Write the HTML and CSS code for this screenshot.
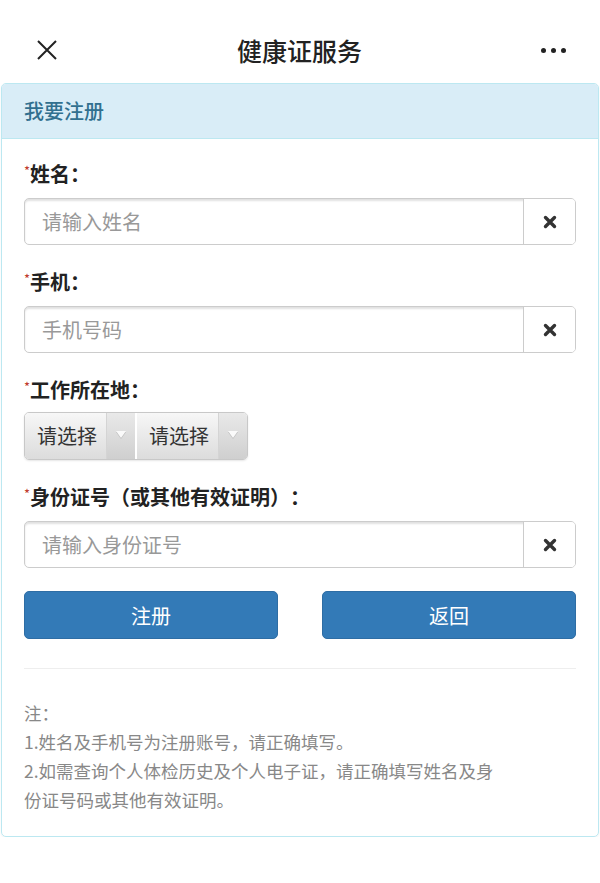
FILE: index.html
```html
<!DOCTYPE html>
<html lang="zh-CN">
<head>
  <meta charset="UTF-8" />
  <title>健康证服务</title>
  <meta name="viewport" content="width=device-width, initial-scale=1" />
  <link rel="stylesheet" href="styles.css">
</head>
<body>

  <div class="navbar">
    <span class="nav-close">
      <svg width="22" height="22" viewBox="0 0 22 22"><path d="M2 2 L20 20 M20 2 L2 20" stroke="#222" stroke-width="2" fill="none"/></svg>
    </span>
    <div class="nav-title">健康证服务</div>
    <span class="nav-more"><i></i><i></i><i></i></span>
  </div>

  <div class="panel">
    <div class="panel-heading">我要注册</div>
    <div class="panel-body">

      <div class="field">
        <label class="field-label"><span class="req">*</span>姓名：</label>
        <div class="input-group">
          <input type="text" placeholder="请输入姓名" />
          <span class="addon"><svg width="14" height="14" viewBox="0 0 14 14"><path d="M2.5 2.5 L11.5 11.5 M11.5 2.5 L2.5 11.5" stroke="#333" stroke-width="3.4" stroke-linecap="round" fill="none"/></svg></span>
        </div>
      </div>

      <div class="field">
        <label class="field-label"><span class="req">*</span>手机：</label>
        <div class="input-group">
          <input type="text" placeholder="手机号码" />
          <span class="addon"><svg width="14" height="14" viewBox="0 0 14 14"><path d="M2.5 2.5 L11.5 11.5 M11.5 2.5 L2.5 11.5" stroke="#333" stroke-width="3.4" stroke-linecap="round" fill="none"/></svg></span>
        </div>
      </div>

      <div class="field">
        <label class="field-label"><span class="req">*</span>工作所在地：</label>
        <div class="select-group">
          <div class="select"><span class="select-text">请选择</span><span class="select-arrow"><b></b></span></div>
          <div class="select"><span class="select-text">请选择</span><span class="select-arrow"><b></b></span></div>
        </div>
      </div>

      <div class="field">
        <label class="field-label"><span class="req">*</span>身份证号（或其他有效证明）：</label>
        <div class="input-group">
          <input type="text" placeholder="请输入身份证号" />
          <span class="addon"><svg width="14" height="14" viewBox="0 0 14 14"><path d="M2.5 2.5 L11.5 11.5 M11.5 2.5 L2.5 11.5" stroke="#333" stroke-width="3.4" stroke-linecap="round" fill="none"/></svg></span>
        </div>
      </div>

      <div class="buttons">
        <button class="btn">注册</button>
        <button class="btn">返回</button>
      </div>

      <hr class="divider" />

      <div class="notes">
        <div>注：</div>
        <div>1.姓名及手机号为注册账号，请正确填写。</div>
        <div>2.如需查询个人体检历史及个人电子证，请正确填写姓名及身份证号码或其他有效证明。</div>
      </div>

    </div>
  </div>

</body>
</html>
```

FILE: styles.css
```css
body {
  margin: 0;
  background: #fff;
  font-family: "Noto Sans CJK SC", "Noto Sans", sans-serif;
  color: #333;
}

.navbar {
  display: flex;
  align-items: center;
  justify-content: space-between;
  height: 32px;
  padding: 34px 34px 17px 36px;
}

.nav-close {
  display: flex;
  width: 22px;
  height: 22px;
}

.nav-title {
  font-size: 25px;
  font-weight: 500;
  color: #222;
  line-height: 32px;
}

.nav-more {
  display: flex;
  gap: 5px;
}

.nav-more i {
  display: block;
  width: 5px;
  height: 5px;
  border-radius: 50%;
  background: #222;
}

.panel {
  margin: 0 1px;
  border: 1px solid #bce8f1;
  border-radius: 5px;
  box-shadow: 0 1px 2px rgba(0, 0, 0, 0.05);
}

.panel-heading {
  height: 54px;
  line-height: 54px;
  padding: 0 22px;
  background: #d9edf7;
  color: #31708f;
  font-size: 20px;
  font-weight: 500;
  border-bottom: 1px solid #bce8f1;
  border-radius: 4px 4px 0 0;
}

.panel-body {
  padding: 23px 22px 22px;
}

.field {
  margin-bottom: 25px;
}

.field-label {
  display: block;
  font-size: 20px;
  font-weight: bold;
  line-height: 24px;
  color: #222;
  margin-bottom: 12px;
  text-spacing-trim: space-all;
}

.req {
  color: #c0392b;
  font-size: 13px;
  vertical-align: top;
  line-height: 18px;
  font-weight: normal;
}

.input-group {
  display: flex;
  height: 47px;
  border: 1px solid #ccc;
  border-radius: 5px;
  box-sizing: border-box;
  box-shadow: inset 0 2px 2px rgba(0, 0, 0, 0.12);
  overflow: hidden;
}

.input-group input {
  flex: 1;
  min-width: 0;
  border: 0;
  outline: none;
  background: transparent;
  padding: 0 17px;
  font-family: inherit;
  font-size: 20px;
  color: #333;
}

.input-group input::placeholder {
  color: #999;
}

.addon {
  width: 51px;
  display: flex;
  align-items: center;
  justify-content: center;
  border-left: 1px solid #ccc;
  background: #fff;
}

.select-group {
  display: inline-flex;
  height: 48px;
  box-sizing: border-box;
  border: 1px solid #c8c8c8;
  border-radius: 5px;
  overflow: hidden;
  margin-top: -2px;
  box-shadow: 0 1px 2px rgba(0, 0, 0, 0.1);
}

.select {
  display: flex;
  background: linear-gradient(#f7f7f7, #dcdcdc);
}

.select + .select {
  border-left: 2px solid #fff;
}

.select-text {
  width: 81px;
  line-height: 46px;
  padding-left: 12px;
  box-sizing: border-box;
  font-size: 20px;
  color: #333;
}

.select-arrow {
  width: 28px;
  display: flex;
  align-items: center;
  justify-content: center;
  background: linear-gradient(#e9e9e9, #cfcfcf);
  border-left: 1px solid #d4d4d4;
}

.select-arrow b {
  width: 0;
  height: 0;
  border-left: 5px solid transparent;
  border-right: 5px solid transparent;
  border-top: 7px solid #fafafa;
  margin-top: -4px;
  filter: drop-shadow(0 1px 0 #bbb);
}

.buttons {
  display: flex;
  justify-content: space-between;
  margin-top: -2px;
}

.btn {
  width: 254px;
  height: 48px;
  background: #337ab7;
  border: 1px solid #2e6da4;
  border-radius: 5px;
  color: #fff;
  font-family: inherit;
  font-size: 20px;
}

.divider {
  border: 0;
  border-top: 1px solid #eee;
  margin: 29px 0 29px;
}

.notes {
  max-width: 476px;
  font-size: 17.5px;
  line-height: 29px;
  color: #888;
}
```
